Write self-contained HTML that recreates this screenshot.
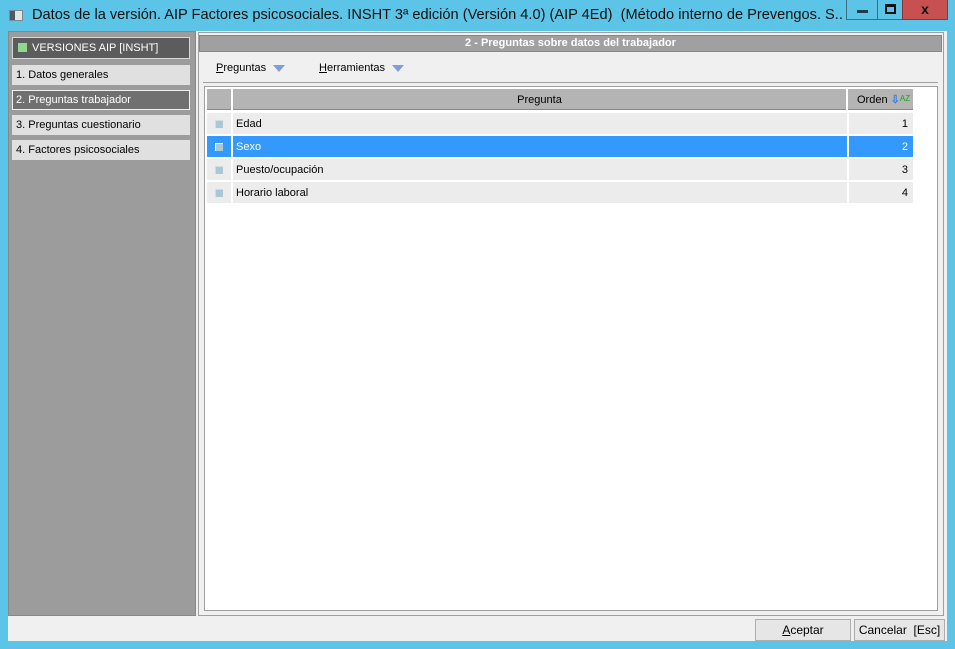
<!DOCTYPE html>
<html><head><meta charset="utf-8"><style>
*{margin:0;padding:0;box-sizing:border-box}
body{width:955px;height:649px;background:#5cc4e6;font-family:"Liberation Sans",sans-serif;font-size:11px;position:relative;overflow:hidden;color:#000}
.a{position:absolute}
.title{left:32px;top:7px;font-size:14.6px;color:#111;white-space:nowrap;width:812px;overflow:hidden}
.item{position:absolute;left:12px;width:178px;height:20px;background:#e0e0e0;padding:4px 0 0 4px;font-size:11px}
.row{position:absolute;left:207px;height:21px}
.row .ic{position:absolute;left:0;width:24px;height:21px;background:#ececec}
.row .c1{position:absolute;left:26px;width:614px;height:21px;background:#ececec;padding:5px 3px}
.row .c2{position:absolute;left:642px;width:64px;height:21px;background:#ececec;padding:5px 5px;text-align:right}
.sel .ic,.sel .c1,.sel .c2{background:#3399ff;color:#fff}
.chk{position:absolute;left:8px;top:7px;width:8px;height:8px;background:#a8c8d8;border-left:1px solid #d0dde4;border-top:1px solid #d0dde4}
.btn{position:absolute;top:619px;height:22px;background:#e6e6e6;border:1px solid #adadad;text-align:center;font-size:12px;padding-top:3px}
.tri{display:inline-block;width:0;height:0;border-left:6px solid transparent;border-right:6px solid transparent;border-top:7px solid #7d9fd6;margin-left:7px;vertical-align:-1px}
</style></head><body>
<div class="a" style="left:9px;top:10px;width:14px;height:11px;background:#dfe6ea;border:1px solid #7a8a94"><div style="width:5px;height:9px;background:#4a5a66"></div></div>
<div class="a title">Datos de la versión. AIP Factores psicosociales. INSHT 3ª edición (Versión 4.0) (AIP 4Ed)&nbsp; (Método interno de Prevengos. S...</div>
<div class="a" style="left:846px;top:0;width:32px;height:20px;border:1px solid #3a6f86;border-top:none;background:#5cc4e6"><div class="a" style="left:10px;top:10px;width:11px;height:3px;background:#1e3e50"></div></div>
<div class="a" style="left:877px;top:0;width:26px;height:20px;border:1px solid #3a6f86;border-top:none;background:#5cc4e6"><div class="a" style="left:7px;top:4px;width:11px;height:10px;border:2px solid #111;border-top-width:3px"></div></div>
<div class="a" style="left:902px;top:0;width:46px;height:20px;background:#c75050;border:1px solid #8a3535;border-top:none;color:#111;font-weight:bold;font-size:14px;text-align:center;line-height:18px">x</div>

<div class="a" style="left:8px;top:31px;width:939px;height:610px;background:#f0f0f0"></div>
<div class="a" style="left:8px;top:31px;width:188px;height:585px;background:#9c9c9c;border:1px solid #888"></div>
<div class="item" style="top:37px;height:22px;background:#5c5c5c;color:#fff;border:1px solid #d8d8d8;padding:4px 0 0 5px"><span style="display:inline-block;width:9px;height:9px;background:#8fd98f;margin-right:5px;vertical-align:-1px"></span>VERSIONES AIP [INSHT]</div>
<div class="item" style="top:65px">1. Datos generales</div>
<div class="item" style="top:90px;background:#707070;color:#fff;border:1px solid #f0f0f0;padding:3px 0 0 3px">2. Preguntas trabajador</div>
<div class="item" style="top:115px">3. Preguntas cuestionario</div>
<div class="item" style="top:140px">4. Factores psicosociales</div>

<div class="a" style="left:198px;top:32px;width:746px;height:584px;background:#f0f0f0;border:1px solid #a0a0a0"></div>
<div class="a" style="left:199px;top:35px;width:743px;height:17px;background:#a0a0a0;border:1px solid #888;color:#fff;font-weight:bold;text-align:center;font-size:11px;line-height:15px">2 - Preguntas sobre datos del trabajador</div>
<div class="a" style="left:216px;top:62px"><u>P</u>reguntas<span class="tri"></span></div>
<div class="a" style="left:319px;top:62px"><u>H</u>erramientas<span class="tri"></span></div>
<div class="a" style="left:203px;top:82px;width:735px;height:1px;background:#a0a0a0"></div>
<div class="a" style="left:204px;top:86px;width:734px;height:525px;background:#fff;border:1px solid #a0a0a0"></div>
<div class="a" style="left:207px;top:89px;width:24px;height:21px;background:#b4b4b4;border-bottom:1px solid #888"></div>
<div class="a" style="left:233px;top:89px;width:613px;height:21px;background:#b4b4b4;border-bottom:1px solid #888;text-align:center;padding-top:5px">Pregunta</div>
<div class="a" style="left:848px;top:89px;width:65px;height:21px;background:#b4b4b4;border-bottom:1px solid #888;padding:4px 0 0 9px">Orden <span style="color:#3a7fd8;font-weight:bold">⇩</span><span style="color:#2a9a2a;font-size:8px;vertical-align:2px">AZ</span></div>

<div class="row" style="top:113px"><div class="ic"><div class="chk"></div></div><div class="c1">Edad</div><div class="c2">1</div></div>
<div class="row sel" style="top:136px"><div class="ic"><div class="chk" style="background:#a8c8d8;border-color:#fff"></div></div><div class="c1">Sexo</div><div class="c2">2</div></div>
<div class="row" style="top:159px"><div class="ic"><div class="chk"></div></div><div class="c1">Puesto/ocupación</div><div class="c2">3</div></div>
<div class="row" style="top:182px"><div class="ic"><div class="chk"></div></div><div class="c1">Horario laboral</div><div class="c2">4</div></div>

<div class="btn" style="left:755px;width:96px"><u>A</u>ceptar</div>
<div class="btn" style="left:854px;width:91px">Cancelar&nbsp; [Esc]</div>
</body></html>
